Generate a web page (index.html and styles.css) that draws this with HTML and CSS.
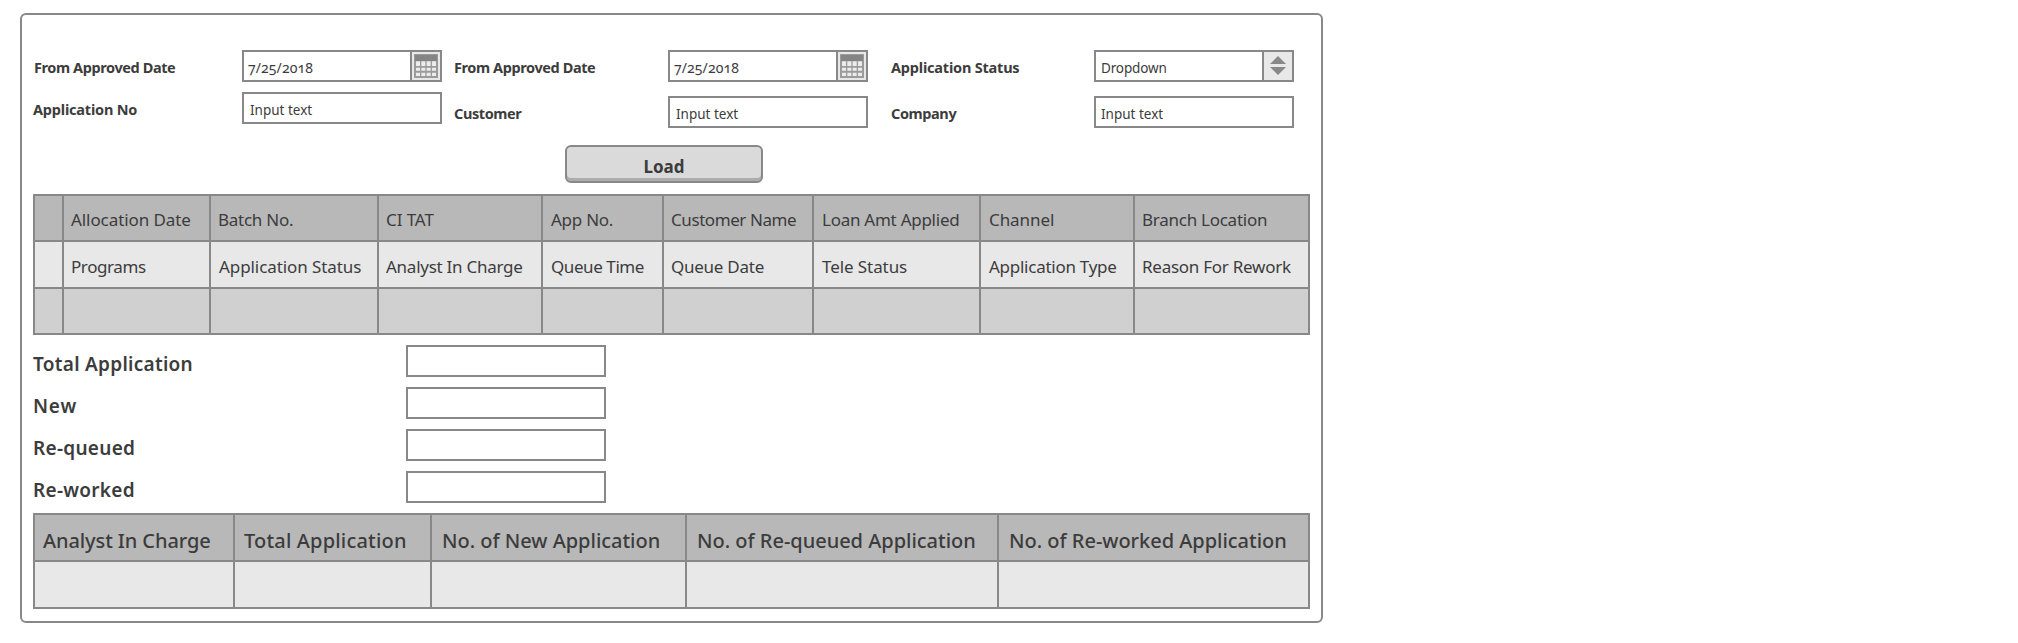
FILE: index.html
```html
<!DOCTYPE html>
<html lang="en">
<head>
<meta charset="utf-8">
<title>Application Allocation</title>
<link rel="stylesheet" href="styles.css">
</head>
<body>
<main class="panel">
  <form class="filters">
    <div class="column column-first">
      <label class="label indent">From Approved Date</label>
      <div class="field"><span class="value date">7/25/2018</span><span class="addon"><svg class="calendar" viewBox="0 0 72 72"><path class="calendar-body" d="M0 0h72v72H0z"/><path class="calendar-head" d="M3 3h66v18H3z"/><path class="calendar-days" d="M6 22h12v14H6zm16 0h12v14H22zm16 0h12v14H38zm16 0h12v14H54zM6 41h12v9H6zm16 0h12v9H22zm16 0h12v9H38zm16 0h12v9H54zM6 56h12v10H6zm16 0h12v10H22zm16 0h12v10H38zm16 0h12v10H54z"/></svg></span></div>
      <label class="label loose">Application No</label>
      <div class="field"><span class="value">Input text</span></div>
    </div>
    <div class="column column-second">
      <label class="label">From Approved Date</label>
      <div class="field"><span class="value date">7/25/2018</span><span class="addon"><svg class="calendar" viewBox="0 0 72 72"><path class="calendar-body" d="M0 0h72v72H0z"/><path class="calendar-head" d="M3 3h66v18H3z"/><path class="calendar-days" d="M6 22h12v14H6zm16 0h12v14H22zm16 0h12v14H38zm16 0h12v14H54zM6 41h12v9H6zm16 0h12v9H22zm16 0h12v9H38zm16 0h12v9H54zM6 56h12v10H6zm16 0h12v10H22zm16 0h12v10H38zm16 0h12v10H54z"/></svg></span></div>
      <label class="label">Customer</label>
      <div class="field"><span class="value">Input text</span></div>
    </div>
    <div class="column column-third">
      <label class="label loose">Application Status</label>
      <div class="field"><span class="value tight">Dropdown</span><span class="addon"><svg class="arrows" viewBox="0 0 16 20"><path d="M8 0l8 8H0zM0 11h16l-8 8z"/></svg></span></div>
      <label class="label">Company</label>
      <div class="field"><span class="value">Input text</span></div>
    </div>
  </form>
  <button class="load" type="button">Load</button>
  <section class="table allocation">
    <div class="cell head"></div>
    <div class="cell head near loose">Allocation Date</div>
    <div class="cell head near">Batch No.</div>
    <div class="cell head near loose">CI TAT</div>
    <div class="cell head">App No.</div>
    <div class="cell head near tight">Customer Name</div>
    <div class="cell head">Loan Amt Applied</div>
    <div class="cell head loose">Channel</div>
    <div class="cell head near">Branch Location</div>
    <div class="cell"></div>
    <div class="cell near tight">Programs</div>
    <div class="cell loose">Application Status</div>
    <div class="cell near">Analyst In Charge</div>
    <div class="cell tight">Queue Time</div>
    <div class="cell near">Queue Date</div>
    <div class="cell loose">Tele Status</div>
    <div class="cell">Application Type</div>
    <div class="cell near">Reason For Rework</div>
    <div class="cell alt"></div><div class="cell alt"></div><div class="cell alt"></div>
    <div class="cell alt"></div><div class="cell alt"></div><div class="cell alt"></div>
    <div class="cell alt"></div><div class="cell alt"></div><div class="cell alt"></div>
  </section>
  <section class="totals">
    <label class="total">Total Application</label><div class="field"></div>
    <label class="total short">New</label><div class="field"></div>
    <label class="total">Re-queued</label><div class="field"></div>
    <label class="total">Re-worked</label><div class="field"></div>
  </section>
  <section class="table summary">
    <div class="cell head near">Analyst In Charge</div>
    <div class="cell head loose">Total Application</div>
    <div class="cell head">No. of New Application</div>
    <div class="cell head">No. of Re-queued Application</div>
    <div class="cell head">No. of Re-worked Application</div>
    <div class="cell"></div><div class="cell"></div><div class="cell"></div>
    <div class="cell"></div><div class="cell"></div>
  </section>
</main>
</body>
</html>
```
FILE: styles.css
```css
* { box-sizing: border-box; }
body { margin: 0; padding: 13px 20px; background: #fff; color: #3c3c3c; font-family: "Noto Sans", sans-serif; }
.panel { width: 1303px; height: 610px; padding: 35px 11px 0; border: 2px solid #888; border-radius: 6px; }

/* Search filters */
.filters { display: flex; height: 95px; }
.column { display: grid; grid-template-rows: 32px 32px; align-content: start; row-gap: 14px; }
.column-first { grid-template-columns: 209px 200px; row-gap: 10px; margin-right: 12px; }
.column-second { grid-template-columns: 214px 200px; margin-right: 22px; }
.column-third { grid-template-columns: 204px 200px; }
.label { padding-top: 7px; font-size: 14.5px; font-weight: 700; line-height: 20px; letter-spacing: -0.4px; white-space: nowrap; }
.label.loose { letter-spacing: -0.2px; }
.label.indent { padding-left: 1px; }
.column-third .label { padding-left: 1px; }
.field { display: flex; width: 200px; height: 32px; border: 2px solid #888; background: #fff; }
.value { flex: 1; padding: 6px 0 0 6px; font-size: 13.5px; line-height: 20px; white-space: nowrap; }
.value.tight { padding-left: 5px; letter-spacing: -0.15px; }
.value.date { padding-left: 4px; font-size: 14px; letter-spacing: 0.1px; font-variant-numeric: oldstyle-nums; }
.column-third .value { padding-left: 5px; }
.addon { display: flex; align-items: center; justify-content: center; width: 30px; border-left: 2px solid #888; background: #e8e8e8; }
.calendar { width: 24px; height: 24px; }
.calendar-body { fill: #9b9b9b; }
.calendar-head { fill: #858585; }
.calendar-days { fill: #ececec; }
.arrows { width: 16px; height: 20px; fill: #888; }
.load { display: block; width: 198px; height: 38px; margin-left: 532px; padding: 5px 0 0; border: 2px solid #888; border-radius: 6px; background: #dadada; box-shadow: inset 0 -3px #adadad; color: inherit; font: 700 17px/24px "Noto Sans", sans-serif; }

/* Tables: the background shows through the gaps as grid lines */
.table { display: grid; gap: 2px; padding: 2px; width: 1277px; background: #888; }
.cell { background: #e8e8e8; white-space: nowrap; }
.head { background: #b8b8b8; }
.alt { background: #d0d0d0; }
.allocation { grid-template-columns: 27px 145px 166px 162px 119px 148px 165px 152px 173px; grid-template-rows: 44px 45px 44px; margin-top: 11px; font-size: 17px; line-height: 24px; letter-spacing: -0.26px; }
.allocation .cell { padding: 13px 0 0 8px; }
.allocation .head { padding-top: 12px; }
.allocation .near { padding-left: 7px; }
.allocation .loose { letter-spacing: -0.08px; }
.allocation .tight { letter-spacing: -0.42px; }

.totals { display: grid; grid-template-columns: 373px 200px; grid-auto-rows: 32px; row-gap: 10px; margin: 10px 0; }
.total { padding-top: 6px; font-size: 19px; font-weight: 600; line-height: 26px; letter-spacing: 0.28px; }
.total.short { letter-spacing: 0.8px; }

.summary { grid-template-columns: 198px 195px 253px 310px 309px; grid-template-rows: 45px 45px; font-size: 20px; font-weight: 500; line-height: 28px; letter-spacing: -0.02px; }
.summary .cell { padding: 12px 0 0 10px; }
.summary .near { padding-left: 8px; letter-spacing: -0.1px; }
.summary .loose { padding-left: 9px; letter-spacing: 0.18px; }
```
